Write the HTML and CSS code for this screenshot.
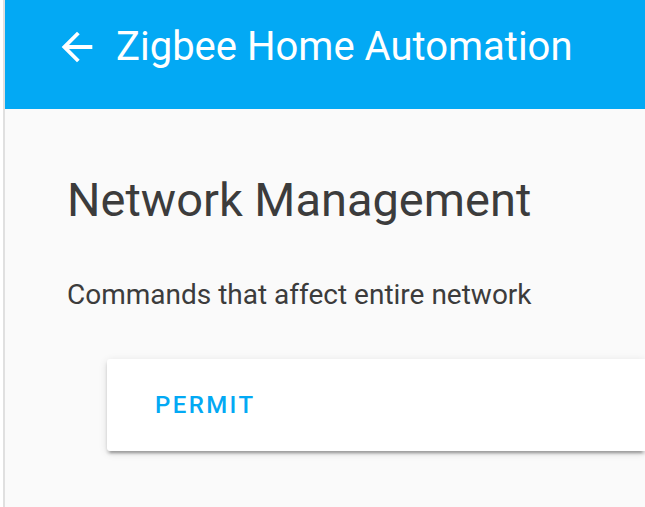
FILE: index.html
```html
<!DOCTYPE html>
<html lang="en">
<head>
    <meta charset="UTF-8">
    <meta name="viewport" content="width=device-width, initial-scale=1.0">
    <title>Zigbee Home Automation</title>
    <link rel="stylesheet" href="styles.css">
</head>
<body>
    <div class="app">
        <header class="toolbar">
            <button class="back" aria-label="Back">
                <svg viewBox="0 0 24 24" width="46" height="46">
                    <path fill="#fff" d="M20 11H7.83l5.59-5.59L12 4l-8 8 8 8 1.41-1.41L7.83 13H20v-2z"/>
                </svg>
            </button>
            <div class="title">Zigbee Home Automation</div>
        </header>

        <main class="content">
            <h1>Network Management</h1>
            <p class="intro">Commands that affect entire network</p>
            <div class="card">
                <button class="btn">Permit</button>
            </div>
        </main>
    </div>
</body>
</html>
```

FILE: styles.css
```css
html, body {
    margin: 0;
    height: 100%;
    overflow: hidden;
}
body {
    font-family: Roboto, "Noto Sans", sans-serif;
    background-color: #fff;
}
.app {
    margin-left: 3px;
    border-left: 2px solid #e0e0e0;
    min-height: 100%;
    background-color: #fafafa;
}
.toolbar {
    height: 109px;
    box-sizing: border-box;
    padding: 0 0 16px 49px;
    display: flex;
    align-items: center;
    background-color: #03a9f4;
    color: white;
}
.back {
    background: none;
    border: 0;
    padding: 0;
    display: flex;
}
.title {
    margin-left: 16px;
    font-size: 40px;
    white-space: nowrap;
}
.content {
    padding: 0 0 0 62px;
}
h1 {
    margin: 0;
    padding-top: 63px;
    font-size: 47px;
    font-weight: 400;
    color: #3c3c3c;
}
.intro {
    margin: 51px 0 0;
    font-size: 28px;
    color: #3c3c3c;
}
.card {
    margin: 48px 0 0 40px;
    height: 92px;
    display: flex;
    align-items: center;
    background: white;
    border-radius: 3px 0 0 3px;
    box-shadow: 0 3px 3px 0 rgba(0, 0, 0, 0.14), 0 2px 8px 0 rgba(0, 0, 0, 0.12), 0 5px 2px -3px rgba(0, 0, 0, 0.2);
}
.btn {
    margin-left: 40px;
    padding: 0 8px;
    background: none;
    border: 0;
    font-family: inherit;
    font-size: 24px;
    font-weight: 500;
    letter-spacing: 0.1em;
    text-transform: uppercase;
    color: #03a9f4;
}
```
